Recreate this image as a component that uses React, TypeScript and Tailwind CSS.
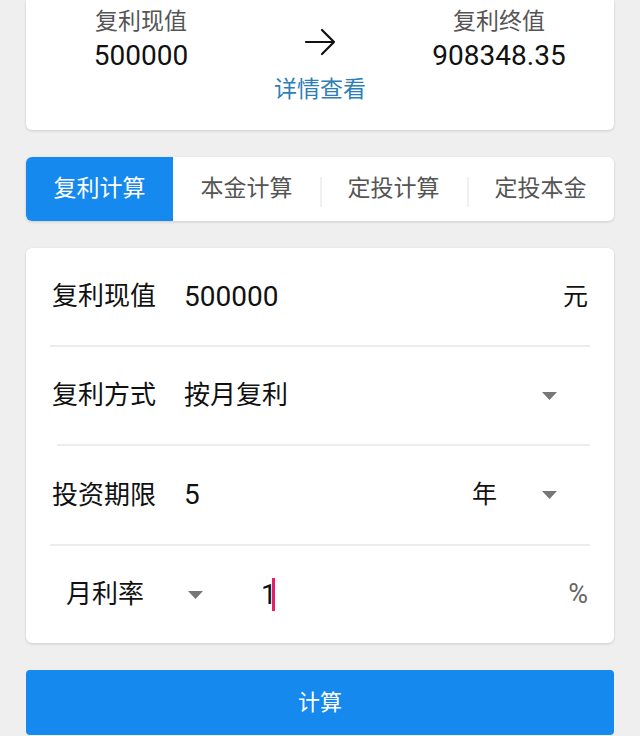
import React from 'react';

const TABS = ['复利计算', '本金计算', '定投计算', '定投本金'];

function Caret({ className = '' }: { className?: string }) {
  return (
    <svg width="15" height="8" viewBox="0 0 15 8" className={className}>
      <polygon points="0,0 15,0 7.5,8" fill="#777" />
    </svg>
  );
}

function Divider({ className = '' }: { className?: string }) {
  return <div className={`h-[2px] bg-[#ececec] ${className}`} />;
}

export default function App() {
  return (
    <div className="h-[736px] overflow-hidden bg-[#efefef] px-[26px] font-['Roboto','Noto_Sans_CJK_SC',sans-serif]">
      {/* Result card */}
      <div className="h-[130px] bg-white rounded-b-md shadow-[0_1px_3px_rgba(0,0,0,0.15)]">
        <div className="grid grid-cols-[230px_1fr_230px] pt-[8px]">
          <div className="flex flex-col items-center">
            <span className="text-[23px] leading-[28px] text-[#555]">复利现值</span>
            <span className="mt-[2px] text-[28px] leading-[36px] text-[#111]">500000</span>
          </div>
          <div className="flex justify-center pt-[20px]">
            <svg width="34" height="28" viewBox="0 0 34 28" fill="none" stroke="#111" strokeWidth="2.2" strokeLinecap="round" strokeLinejoin="round">
              <path d="M3 14h28M19 2l12 12-12 12" />
            </svg>
          </div>
          <div className="flex flex-col items-center">
            <span className="text-[23px] leading-[28px] text-[#555]">复利终值</span>
            <span className="mt-[2px] text-[28px] leading-[36px] text-[#111]">908348.35</span>
          </div>
        </div>
        <div className="mt-[1px] text-center text-[23px] leading-[30px] text-[#2e7fb5]">详情查看</div>
      </div>

      {/* Tabs */}
      <div className="mt-[27px] h-[64px] grid grid-cols-4 bg-white rounded-md overflow-hidden shadow-[0_1px_3px_rgba(0,0,0,0.15)]">
        {TABS.map((t, i) => (
          <div
            key={t}
            className={`relative flex items-center justify-center text-[23px] ${i === 0 ? 'bg-[#1589ee] text-white' : 'text-[#555]'}`}
          >
            {i > 1 && <div className="absolute left-0 top-[20px] h-[30px] w-[2px] bg-[#f0f0f0]" />}
            {t}
          </div>
        ))}
      </div>

      {/* Form card */}
      <div className="mt-[27px] bg-white rounded-md shadow-[0_1px_3px_rgba(0,0,0,0.15)] text-[#111]">
        <div className="h-[97px] flex items-center pl-[26px] pr-[26px] text-[26px]">
          <span className="w-[132px]">复利现值</span>
          <span className="flex-1 text-[28px]">500000</span>
          <span className="text-[25px]">元</span>
        </div>
        <Divider className="mx-[24px]" />
        <div className="h-[97px] flex items-center pl-[26px] pr-[57px] text-[26px]">
          <span className="w-[132px]">复利方式</span>
          <span className="flex-1">按月复利</span>
          <Caret />
        </div>
        <Divider className="ml-[31px] mr-[24px]" />
        <div className="h-[98px] flex items-center pl-[26px] pr-[57px] text-[26px]">
          <span className="w-[132px]">投资期限</span>
          <span className="flex-1 text-[28px]">5</span>
          <span className="mr-[45px] text-[25px]">年</span>
          <Caret />
        </div>
        <Divider className="mx-[24px]" />
        <div className="h-[97px] flex items-center pl-[40px] pr-[26px] text-[26px]">
          <span className="w-[122px]">月利率</span>
          <Caret />
          <span className="ml-[58px] text-[28px] leading-none">1</span>
          <span className="-ml-[5px] h-[33px] w-[3px] bg-[#e91e63]" />
          <span className="ml-auto text-[27px] text-[#666]">%</span>
        </div>
      </div>

      {/* Submit */}
      <button className="mt-[27px] h-[65px] w-full rounded-[4px] bg-[#1589ee] text-[22px] text-white">
        计算
      </button>
    </div>
  );
}
